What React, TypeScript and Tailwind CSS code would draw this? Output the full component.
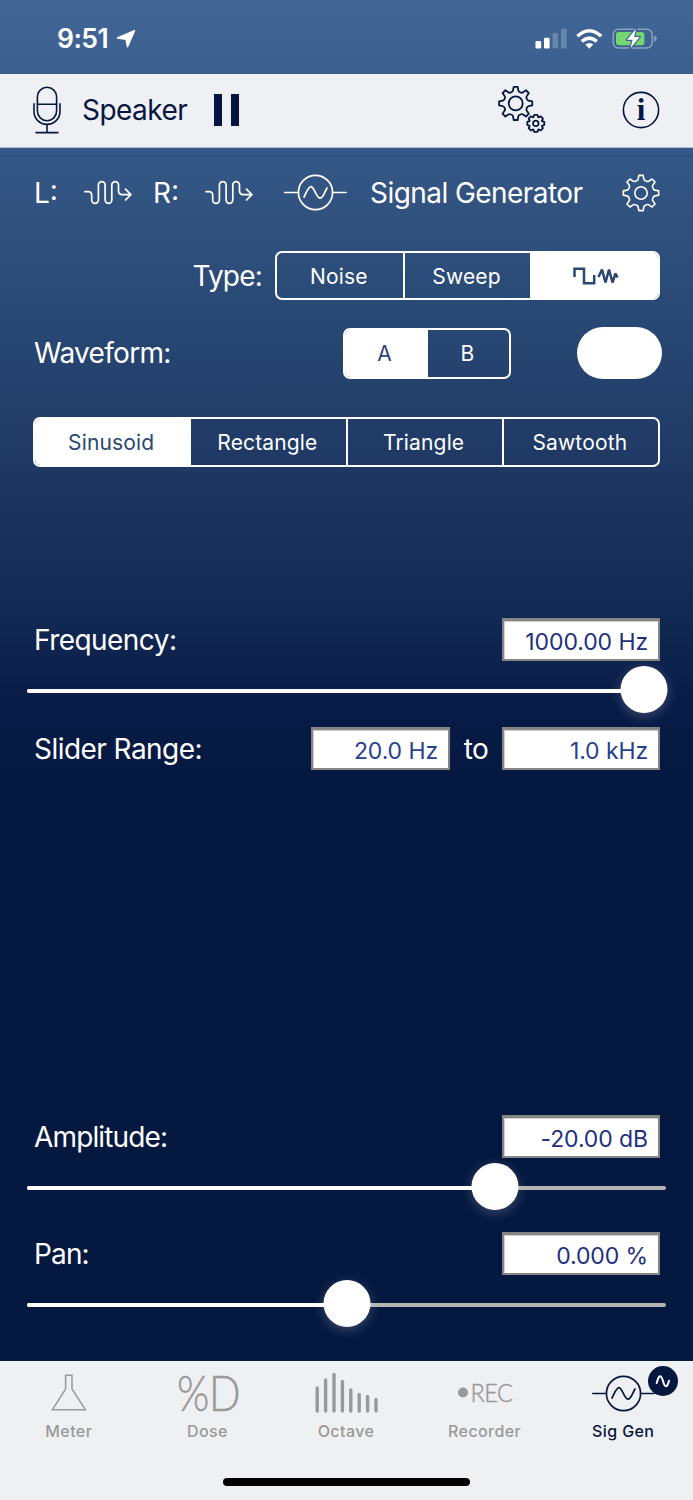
import type { ReactNode } from "react";
import clsx from "clsx";

// ── Icons ─────────────────────────────────────────────────────────────────

// Outline of a cog centred on (0, 0)
function gearPath(teeth: number, outer: number, inner: number, tip: number, base: number) {
  const step = (Math.PI * 2) / teeth;
  const pt = (r: number, a: number) =>
    `${(r * Math.sin(a)).toFixed(2)} ${(-r * Math.cos(a)).toFixed(2)}`;
  let d = "";
  for (let i = 0; i < teeth; i++) {
    const a = i * step;
    d += `${i === 0 ? "M" : "L"}${pt(outer, a - tip)} L${pt(outer, a + tip)} `;
    d += `L${pt(inner + 1.4, a + base)} Q${pt(inner, a + base * 1.15)} ${pt(inner, a + step / 2)} `;
    d += `Q${pt(inner, a + step - base * 1.15)} ${pt(inner + 1.4, a + step - base)} `;
  }
  return d + "Z";
}

const BIG_GEAR = gearPath(8, 16.7, 12, 0.12, 0.2);
const SMALL_GEAR = gearPath(8, 8.6, 6.6, 0.17, 0.25);
const HEADER_GEAR = gearPath(8, 17.8, 12.9, 0.12, 0.2);

function GearIcon() {
  return (
    <svg width="38" height="38" viewBox="-19 -19 38 38" fill="none" stroke="currentColor" strokeWidth="1.6" strokeLinejoin="round">
      <path d={HEADER_GEAR} />
      <circle r="6.2" />
    </svg>
  );
}

function GearsIcon() {
  return (
    <svg width="50" height="50" viewBox="0 0 50 50" fill="none" stroke="currentColor" strokeWidth="1.8" strokeLinejoin="round">
      <g transform="translate(18.7 18.4)">
        <path d={BIG_GEAR} />
        <circle r="7" />
      </g>
      <g transform="translate(38.8 38.4)">
        <path d={SMALL_GEAR} fill="#eff0f4" />
        <circle r="2.8" />
      </g>
    </svg>
  );
}

function MicIcon() {
  return (
    <svg width="28" height="48" viewBox="0 0 28 48" fill="none" stroke="currentColor" strokeWidth="1.6" strokeLinecap="round">
      <rect x="4.4" y="1.3" width="19.2" height="33.4" rx="9.6" />
      <path d="M4.4 18.2H23.6M1 17.8V25.4a13 13 0 0 0 26 0V17.8M14 38.5V46.5M3 46.6H25" />
    </svg>
  );
}

function RouteIcon() {
  return (
    <svg width="48" height="26" viewBox="0 0 48 26" fill="none" stroke="currentColor" strokeWidth="1.7" strokeLinecap="round" strokeLinejoin="round">
      <path d="M1 11.7H4.2Q7.7 11.7 7.7 15.2V20a3.3 3.3 0 0 0 6.7 0V5a3.3 3.3 0 0 1 6.7 0V20a3.3 3.3 0 0 0 6.7 0V5a3.3 3.3 0 0 1 6.7 0V10.7Q34.5 14.6 38.4 14.6H46.6M41.5 9.2L46.9 14.6L41.5 20" />
    </svg>
  );
}

function OscillatorIcon() {
  return (
    <svg width="63" height="37" viewBox="0 0 63 37" fill="none" stroke="currentColor" strokeWidth="1.7" strokeLinecap="round">
      <circle cx="31.5" cy="18.5" r="17.1" />
      <path d="M.8 18.5H14.4M48.6 18.5H62.2" />
      <path d="M20 23C23 17 24.5 12.7 27 12.7C30 12.7 32.5 24.2 36 24.2C39 24.2 40.3 18.5 43 14" />
    </svg>
  );
}

function StatusIcons() {
  return (
    <svg width="123" height="22" viewBox="0 0 123 22">
      <g fill="#fff">
        <rect x=".5" y="13" width="5.6" height="7.6" rx="1.3" />
        <rect x="9" y="9.8" width="5.6" height="10.8" rx="1.3" />
        <rect x="17.5" y="5" width="5.6" height="15.6" rx="1.3" opacity=".22" />
        <rect x="26" y=".8" width="5.6" height="19.8" rx="1.3" opacity=".22" />
        <path d="M54.3 20.7L50.3 16.6Q54.3 13.4 58.3 16.6Z" />
      </g>
      <path d="M46.8 13.3Q54.3 7 61.8 13.3M42.4 8.3Q54.3-2.8 66.2 8.3" fill="none" stroke="#fff" strokeWidth="3.5" />
      <rect x="78.2" y="1.2" width="39" height="18.8" rx="5.4" fill="none" stroke="#8ba2bf" strokeWidth="1.5" />
      <path d="M119 7.5Q121.8 8.5 121.8 10.6T119 13.7Z" fill="#8ba2bf" />
      <rect x="81" y="4" width="28.4" height="13.3" rx="2.8" fill="#74d671" />
      <path d="M101 .8L92 11.8H97.6L95.4 20.3L104.6 8.9H99.1Z" fill="#fff" stroke="#3e6293" strokeWidth="2.4" paintOrder="stroke" strokeLinejoin="round" />
    </svg>
  );
}

function FlaskIcon() {
  return (
    <svg width="36" height="38" viewBox="0 0 36 38" fill="none" stroke="currentColor" strokeWidth="1.5">
      <path d="M14.6 1.2H21V15L34.4 35.7H1.4L14.6 15Z" />
    </svg>
  );
}

const OCTAVE_TOPS = [15, 7, 1.5, 8.5, 17, 21.5, 23.5, 26.5];

function OctaveIcon() {
  return (
    <svg width="64" height="42" viewBox="0 0 64 42" stroke="currentColor" strokeWidth="3.4" strokeLinecap="round" className="ml-[2px]">
      {OCTAVE_TOPS.map((top, i) => (
        <path key={i} d={`M${2.2 + i * 8.4} ${top + 1}V39`} />
      ))}
    </svg>
  );
}

function DoseIcon() {
  return (
    <svg width="74" height="64" viewBox="0 0 74 64" fill="currentColor" stroke="currentColor" strokeWidth=".5" className="font-['Lato'] font-light">
      <text x="6" y="50" fontSize="50" textLength="63" lengthAdjust="spacingAndGlyphs">%D</text>
    </svg>
  );
}

function RecIcon() {
  return (
    <svg width="66" height="40" viewBox="0 0 66 40" fill="currentColor" className="font-['Lato'] font-light">
      <circle cx="11" cy="19.5" r="5" />
      <text x="18.5" y="29" fontSize="24.5" stroke="currentColor" strokeWidth=".4" textLength="42" lengthAdjust="spacingAndGlyphs">REC</text>
    </svg>
  );
}

// ── Controls ──────────────────────────────────────────────────────────────

interface SegmentedProps {
  items: ReactNode[];
  active: number;
  className?: string;
}

function Segmented({ items, active, className }: SegmentedProps) {
  return (
    <div className={clsx("flex overflow-hidden rounded-[7px] border-2 border-white tracking-[0.15px]", className)}>
      {items.map((item, i) => (
        <div
          key={i}
          className={clsx(
            "flex flex-1 items-center justify-center pt-px pr-[2px] text-[21px]",
            i > 0 && "border-l-2 border-white",
            i === active ? "bg-white text-[#284872]" : "text-white"
          )}
        >
          {item}
        </div>
      ))}
    </div>
  );
}

function Field({ value, className }: { value: string; className?: string }) {
  return (
    <div
      className={clsx(
        "flex h-[43px] items-center justify-end border-2 border-t-[3px] border-[#858585] bg-white pt-[5px] pr-[10px] text-[23px] tracking-[-0.1px] whitespace-nowrap shadow-[inset_1px_1px_0_#cfcfcf]",
        className
      )}
    >
      {value}
    </div>
  );
}

function Slider({ value }: { value: number }) {
  return (
    <div className="relative mx-[27px] flex h-[60px] items-center">
      <div className="h-[3.5px] w-full overflow-hidden rounded-full bg-[#b3b3b3]">
        <div className="h-full bg-white" style={{ width: `${value}%` }} />
      </div>
      <div
        className="absolute top-[5px] size-[47px] -translate-x-1/2 rounded-full bg-white shadow-[0_3px_12px_rgba(255,255,255,0.22)]"
        style={{ left: `${value}%` }}
      />
    </div>
  );
}

interface TabProps {
  icon: ReactNode;
  label: string;
  active?: boolean;
}

function Tab({ icon, label, active }: TabProps) {
  return (
    <div className={clsx("flex flex-1 flex-col items-center", active ? "text-[#05173f]" : "text-[#999]")}>
      <div className="flex h-[64px] items-center justify-center">{icon}</div>
      <span className="-mt-[6px] pr-px text-base leading-6 font-medium tracking-[0.4px]">{label}</span>
    </div>
  );
}

// ──────────────────────────────────────────────────────────────────────────

export default function App() {
  return (
    <div className="flex h-[1500px] w-[693px] flex-col overflow-hidden bg-[linear-gradient(180deg,#426797_0px,#3b6090_74px,#355785_160px,#2a4a76_300px,#1e3863_470px,#122a53_610px,#091c48_700px,#051840_780px)] font-['Inter',sans-serif] text-[28px] leading-none tracking-[-0.55px] text-white">
      {/* Status bar */}
      <div className="flex h-[74px] shrink-0 items-center pt-[3px] pr-[35px] pl-[57px]">
        <span className="w-[54px] text-[26.5px] font-semibold">9:51</span>
        <svg width="20" height="20" viewBox="0 0 20 20" className="ml-[5px]" fill="#fff" stroke="#fff" strokeWidth="1.5" strokeLinejoin="round">
          <path d="M18.5 1.8L11.5 17.7L10 10.3L1.5 9Z" />
        </svg>
        <span className="ml-auto">
          <StatusIcons />
        </span>
      </div>

      {/* Toolbar */}
      <div className="flex h-[74px] shrink-0 items-center border-b border-[#aebbcb] bg-[#eff0f4] pr-[33px] pb-px pl-[33px] text-[#05173f]">
        <MicIcon />
        <span className="ml-[21px] w-[132px]">Speaker</span>
        <div className="flex gap-[9px]">
          <div className="h-8 w-2 bg-[#05173f]" />
          <div className="h-8 w-2 bg-[#05173f]" />
        </div>
        <div className="mr-[75px] ml-auto">
          <GearsIcon />
        </div>
        <svg width="38" height="38" viewBox="0 0 38 38">
          <circle cx="19" cy="19" r="17.6" fill="none" stroke="currentColor" strokeWidth="1.6" />
          <text x="19" y="28.7" textAnchor="middle" fontSize="31" fill="currentColor" className="font-['Liberation_Serif'] font-bold tracking-normal">i</text>
        </svg>
      </div>
      <div className="h-2 shrink-0 border-b border-[#2c4b75]" />

      {/* Generator header */}
      <div className="flex h-[73px] shrink-0 items-center pr-[33px] pl-[34px]">
        <span className="w-[50px] tracking-normal">L:</span>
        <RouteIcon />
        <span className="ml-[21px] w-[52px] tracking-normal">R:</span>
        <RouteIcon />
        <span className="ml-[31px]">
          <OscillatorIcon />
        </span>
        <span className="ml-[23px] whitespace-nowrap">Signal Generator</span>
        <span className="ml-auto">
          <GearIcon />
        </span>
      </div>

      <div className="mt-[22px] flex h-[49px] shrink-0 items-center justify-end pr-[33px]">
        <span className="mr-[13px] tracking-[-0.8px]">Type:</span>
        <Segmented
          className="h-[49px] w-[385px]"
          active={2}
          items={[
            "Noise",
            "Sweep",
            <svg width="46" height="18" viewBox="0 0 46 18" fill="none" stroke="currentColor" strokeWidth="2.5" className="ml-[4px]">
              <path d="M1.5 10V1.8H11V16.2H21.2V8" />
              <path d="M25.5 10L29 2.5L32.5 15.5L36 2.5L39.5 15.5L42.5 6.5L44.5 10.5" strokeLinejoin="bevel" />
            </svg>,
          ]}
        />
      </div>

      <div className="mt-[26px] flex h-[53px] shrink-0 items-center pr-[31px] pl-[34px]">
        <span className="w-[309px] tracking-[-0.7px]">Waveform:</span>
        <Segmented className="mt-px h-[51px] w-[168px]" active={0} items={["A", "B"]} />
        <div className="ml-auto h-[52px] w-[85px] rounded-full bg-white" />
      </div>

      <Segmented
        className="mr-[33px] ml-[33px] mt-[38px] h-[50px] shrink-0"
        active={0}
        items={["Sinusoid", "Rectangle", "Triangle", "Sawtooth"]}
      />

      {/* Frequency */}
      <div className="mt-[151px] flex shrink-0 items-center justify-between pr-[33px] pl-[34px]">
        <span>Frequency:</span>
        <Field value="1000.00 Hz" className="w-[158px] text-[#1f2f80]" />
      </div>
      <Slider value={96.5} />
      <div className="mt-[6px] flex shrink-0 items-center pr-[33px] pl-[34px]">
        <span>Slider Range:</span>
        <Field value="20.0 Hz" className="ml-auto w-[139px] text-[#27408f]" />
        <span className="w-[52px] text-center">to</span>
        <Field value="1.0 kHz" className="w-[158px] text-[#27408f]" />
      </div>

      {/* Output level */}
      <div className="mt-auto flex shrink-0 items-center justify-between pr-[33px] pl-[34px]">
        <span className="tracking-[-0.85px]">Amplitude:</span>
        <Field value="-20.00 dB" className="w-[158px] text-[#1f2f80]" />
      </div>
      <Slider value={73.2} />
      <div className="mt-[14px] flex shrink-0 items-center justify-between pr-[33px] pl-[34px]">
        <span className="tracking-[-0.85px]">Pan:</span>
        <Field value="0.000 %" className="w-[158px] text-[#1f2f80]" />
      </div>
      <Slider value={50.1} />

      {/* Tab bar */}
      <div className="mt-[26px] flex h-[139px] shrink-0 flex-col items-center bg-[#eff0f2]">
        <div className="flex w-full">
          <Tab icon={<FlaskIcon />} label="Meter" />
          <Tab icon={<DoseIcon />} label="Dose" />
          <Tab icon={<OctaveIcon />} label="Octave" />
          <Tab icon={<RecIcon />} label="Recorder" />
          <Tab
            active
            label="Sig Gen"
            icon={
              <div className="relative">
                <OscillatorIcon />
                <svg width="30" height="30" viewBox="0 0 30 30" className="absolute -top-[9px] left-[56px]">
                  <circle cx="15" cy="15" r="15" fill="#05173f" />
                  <path d="M8.7 17C10 12.5 10.7 10.2 12.3 10.2C15 10.2 15 20.3 18 20.3C19.8 20.3 20.2 17.5 21 14.7" fill="none" stroke="#fff" strokeWidth="2" strokeLinecap="round" />
                </svg>
              </div>
            }
          />
        </div>
        <div className="mt-[35px] h-[8px] w-[247px] rounded-full bg-black" />
      </div>
    </div>
  );
}
